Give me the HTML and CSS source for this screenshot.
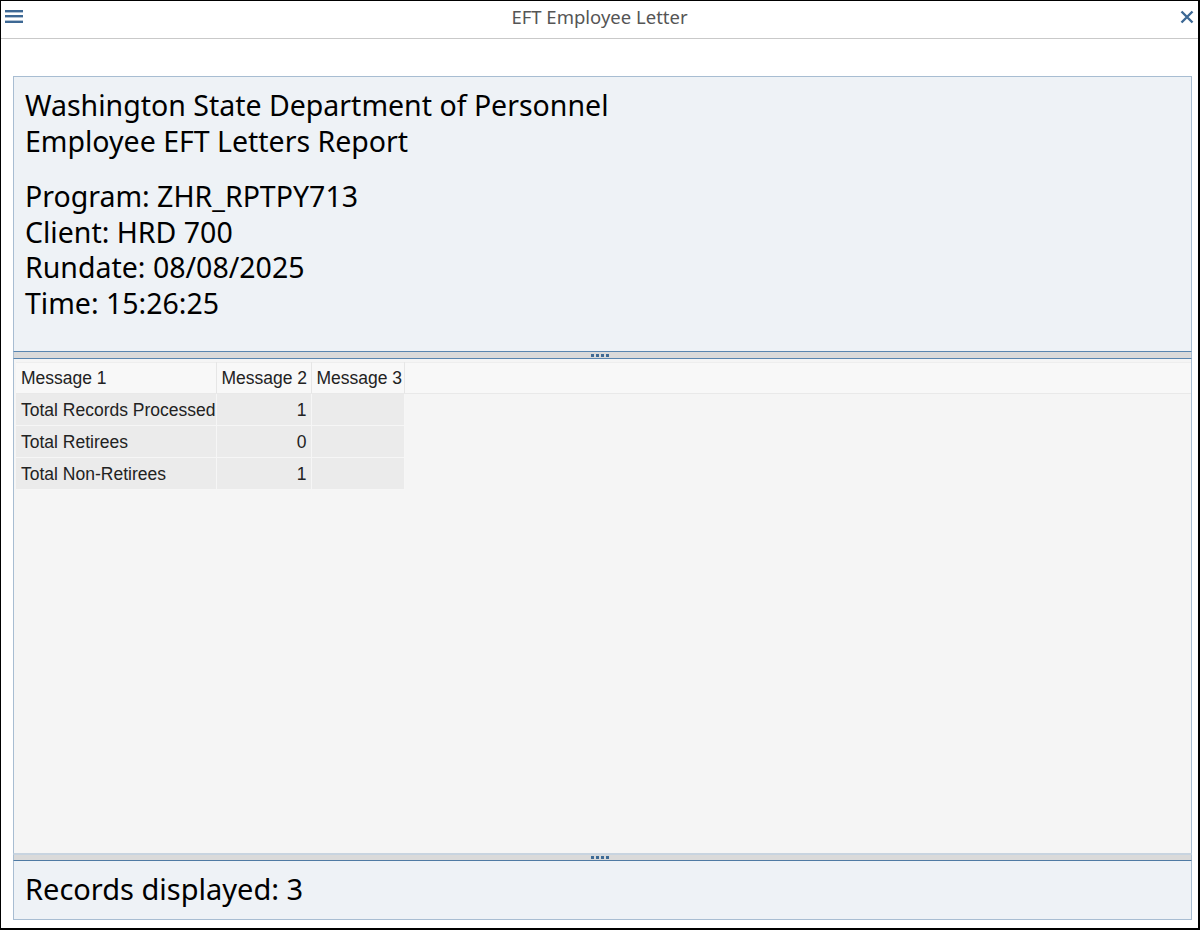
FILE: index.html
```html
<!DOCTYPE html>
<html lang="en">
<head>
  <meta charset="UTF-8" />
  <title>EFT Employee Letter</title>
  <link rel="stylesheet" href="styles.css">
</head>
<body>

  <div class="window">

    <!-- Barra de titulo -->
    <div class="titlebar">
      <svg class="menu-icon" width="20" height="16" viewBox="0 0 20 16">
        <rect x="0" y="2" width="18" height="2.4" fill="#3d6894"/>
        <rect x="0" y="7" width="18" height="2.4" fill="#3d6894"/>
        <rect x="0" y="12.6" width="18" height="2.4" fill="#3d6894"/>
      </svg>
      <div class="title">EFT Employee Letter</div>
      <svg class="close-icon" width="14" height="14" viewBox="0 0 14 14">
        <path d="M1.5 1.5 L12.5 12.5 M12.5 1.5 L1.5 12.5" stroke="#3d6894" stroke-width="2.4" fill="none"/>
      </svg>
    </div>

    <div class="content">

      <!-- Cabecera del reporte -->
      <div class="pane pane-header">
        <div class="line">Washington State Department of Personnel</div>
        <div class="line">Employee EFT Letters Report</div>
        <div class="meta">
          <div class="line">Program: ZHR_RPTPY713</div>
          <div class="line">Client: HRD 700</div>
          <div class="line">Rundate: 08/08/2025</div>
          <div class="line">Time: 15:26:25</div>
        </div>
      </div>

      <div class="splitter"><span class="grip"><i></i><i></i><i></i><i></i></span></div>

      <!-- Grilla -->
      <div class="pane pane-grid">
        <table class="grid">
          <colgroup>
            <col class="c1"><col class="c2"><col class="c3"><col>
          </colgroup>
          <thead>
            <tr>
              <th>Message 1</th>
              <th class="num">Message 2</th>
              <th>Message 3</th>
              <th class="fill"></th>
            </tr>
          </thead>
          <tbody>
            <tr><td>Total Records Processed</td><td class="num">1</td><td></td><td class="fill"></td></tr>
            <tr><td>Total Retirees</td><td class="num">0</td><td></td><td class="fill"></td></tr>
            <tr><td>Total Non-Retirees</td><td class="num">1</td><td></td><td class="fill"></td></tr>
          </tbody>
        </table>
      </div>

      <div class="splitter splitter-low"><span class="grip"><i></i><i></i><i></i><i></i></span></div>

      <!-- Pie -->
      <div class="pane pane-footer">
        <div class="line">Records displayed: 3</div>
      </div>

    </div>
  </div>

</body>
</html>
```

FILE: styles.css
```css
html, body {
  margin: 0;
  padding: 0;
  background: #fff;
}

.window {
  box-sizing: border-box;
  width: 1200px;
  height: 930px;
  border: 1px solid #000;
  border-right-width: 2px;
  border-bottom-width: 2px;
  display: flex;
  flex-direction: column;
  background: #fff;
}

/* Barra de titulo */
.titlebar {
  height: 37px;
  flex: none;
  border-bottom: 1px solid #c9c9c9;
  display: grid;
  grid-template-columns: 1fr auto 1fr;
  align-items: center;
  font-family: "Noto Sans", sans-serif;
}

.menu-icon {
  margin-left: 4px;
  margin-top: -7px;
}

.title {
  text-align: center;
  font-size: 18.5px;
  color: #555;
  margin-top: -6px;
}

.close-icon {
  justify-self: end;
  margin-right: 4px;
  margin-top: -6px;
}

.content {
  flex: 1;
  display: flex;
  flex-direction: column;
  padding: 37px 6px 8px 12px;
  min-height: 0;
}

.pane {
  box-sizing: border-box;
  border: 1px solid #a8bdd2;
  background: #eef2f6;
}

.pane-header {
  height: 275px;
  flex: none;
  border-bottom: none;
  padding: 10px 11px 0;
  font-family: "Noto Sans", sans-serif;
  font-size: 28.5px;
  color: #000;
}

.pane-header .line {
  line-height: 36px;
}

.meta {
  margin-top: 20px;
}

.meta .line {
  line-height: 35.5px;
}

/* Separadores */
.splitter {
  box-sizing: border-box;
  height: 8px;
  flex: none;
  background: #dadada;
  border-top: 1px solid #5a86b0;
  border-bottom: 1px solid #5a86b0;
  border-left: 1px solid #a8bdd2;
  border-right: 1px solid #a8bdd2;
  display: flex;
  justify-content: center;
  align-items: center;
}

.splitter-low {
  height: 7px;
  border-top: 1px solid #c8d4e0;
  border-bottom: 1px solid #4f7aa3;
}

.grip {
  display: flex;
  gap: 2px;
  margin-left: -6px;
}

.grip i {
  display: block;
  width: 3px;
  height: 3px;
  background: #3f6b95;
}

.pane-grid {
  flex: 1;
  border-top: none;
  border-bottom: 1px solid #c8d4e0;
  background: #f5f5f5;
  padding: 3px 0 0 2px;
  min-height: 0;
}

.grid {
  border-collapse: collapse;
  table-layout: fixed;
  width: 100%;
  font-family: "Liberation Sans", Arial, sans-serif;
  font-size: 17.5px;
  color: #222;
}

.grid col.c1 { width: 200px; }
.grid col.c2 { width: 95px; }
.grid col.c3 { width: 93px; }

.grid th, .grid td {
  height: 32px;
  padding: 0 4px 0 5px;
  white-space: nowrap;
  overflow: visible;
  box-sizing: border-box;
}

.grid th {
  height: 31px;
  font-weight: normal;
  text-align: left;
  background: #f8f8f8;
  border-right: 1px solid #e6e6e6;
  border-bottom: 1px solid #e9e9e9;
  border-top: 1px solid #eeeeee;
  padding-top: 1px;
}

.grid th.fill {
  border-right: none;
}

.grid td {
  background: #ebebeb;
  border-right: 1px solid #f6f6f6;
  border-bottom: 1px solid #f6f6f6;
  padding-top: 2px;
}

.grid td.fill {
  background: transparent;
  border: none;
}

.grid .num {
  text-align: right;
}

.pane-footer {
  height: 59px;
  flex: none;
  border-top: none;
  padding: 10px 11px 0;
  font-family: "Noto Sans", sans-serif;
  font-size: 29px;
  line-height: 36px;
  color: #000;
}
```
